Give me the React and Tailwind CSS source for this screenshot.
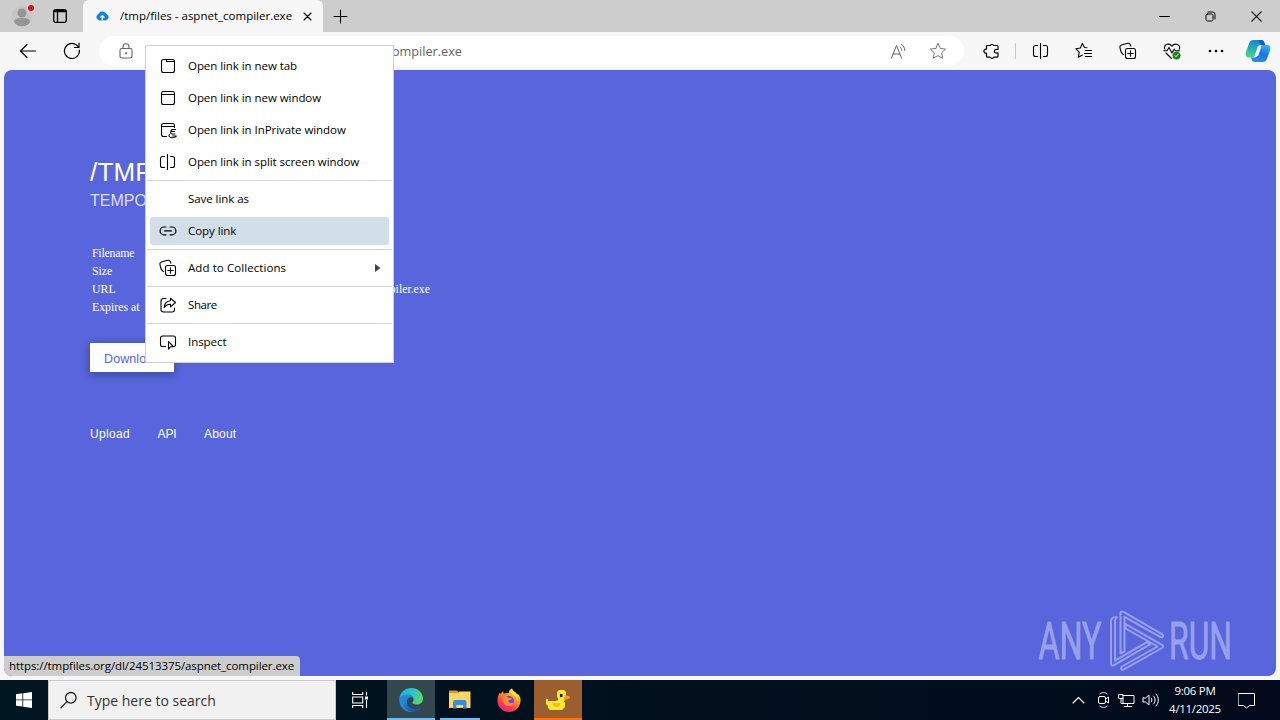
import React from "react";

function Icon({ w = 18, h = w, sw = 1.1, className = "", children }) {
  return (
    <svg
      width={w}
      height={h}
      viewBox={`0 0 ${w} ${h}`}
      fill="none"
      stroke="currentColor"
      strokeWidth={sw}
      strokeLinecap="round"
      strokeLinejoin="round"
      className={`shrink-0 ${className}`}
    >
      {children}
    </svg>
  );
}

const CollectionsIcon = () => (
  <Icon>
    <rect x="6.5" y="6.5" width="10" height="10" rx="2" />
    <path d="M11.5 8.8v5.4M8.8 11.5h5.4M4.6 12.6 4 12.2C2.6 11.4 2 10 1.6 8.5L1 5.6C.7 4.4 1.2 3.4 2.4 3L8.7 1.3c1.2-.3 2.2.3 2.6 1.4l.5 1.5" />
  </Icon>
);

const SplitIcon = () => (
  <Icon>
    <path d="M5.500 3.500H3.500a2 2 0 0 0-2 2v7a2 2 0 0 0 2 2h2M11.500 3.500h2a2 2 0 0 1 2 2v7a2 2 0 0 1-2 2h-2M8.500 1.500v15" />
  </Icon>
);

function TabStrip() {
  return (
    <div className="flex h-8 shrink-0 bg-[#cdcdcd]">
      <div className="flex w-[83px] items-center rounded-br-md">
        <svg width="24" height="24" viewBox="0 0 24 24" className="ml-3">
          <circle cx="10" cy="12" r="10.5" fill="#c8c6c4" />
          <circle cx="10" cy="9" r="4.5" fill="#979593" />
          <path d="M2 18c0-3 3-4 8-4s8 1 8 4c-1.5 3-5 4.300-8 4.300S3.500 21 2 18z" fill="#979593" />
          <circle cx="19" cy="4" r="3" fill="#d9131c" />
        </svg>
        <Icon w={16} sw={1.3} className="ml-4 text-black">
          <rect x="1.700" y="1.700" width="12.600" height="12.600" rx="2" />
          <path d="M2.500 3.200h11" strokeWidth="2.200" />
          <path d="M5.500 4v10" />
        </Icon>
      </div>
      <div className="flex w-60 items-center rounded-t-md bg-[#f7f7f7] pl-[13px]">
        <svg width="13" height="12" viewBox="0 0 13 12" className="shrink-0">
          <path d="M3.200 10A3 3 0 0 1 2.600 4.300 4 4 0 0 1 10 4.200 3 3 0 0 1 10 10z" fill="#0d7df2" stroke="#0d7df2" strokeWidth=".8" />
          <path d="M6.400 10.500V6.200M4.300 7.600l2.100-2.100 2.100 2.100" stroke="#fff" strokeWidth="1.300" fill="none" />
        </svg>
        <span className="ml-[11px] w-[176px] whitespace-nowrap text-[11.5px] text-black">
          /tmp/files - aspnet_compiler.exe
        </span>
        <Icon w={9} className="ml-[7px] text-black">
          <path d="m1 1 7 7M8 1 1 8" />
        </Icon>
      </div>
      <div className="flex flex-1 items-center pl-[10px] text-black">
        <Icon w={15}>
          <path d="M7.500 1v13M1 7.500h13" />
        </Icon>
      </div>
      <div className="flex items-center pr-[18px] text-black">
        <Icon w={11} sw={1}>
          <path d="M.5 5.500h10" />
        </Icon>
        <Icon w={11} sw={1} className="ml-[35px]">
          <rect x="1" y="3" width="7" height="7" rx="1.500" />
          <path d="M3 1h4.500A2.500 2.500 0 0 1 10 3.500V8" />
        </Icon>
        <Icon w={11} sw={1.1} className="ml-[35px]">
          <path d="m.8.8 9.400 9.400M10.200.8.8 10.200" />
        </Icon>
      </div>
    </div>
  );
}

function Toolbar() {
  return (
    <div className="flex h-[38px] shrink-0 items-center bg-[#f7f7f7] text-black">
      <Icon className="ml-[19px]">
        <path d="M16.500 9H1.500M8 2.500 1.500 9 8 15.500" />
      </Icon>
      <Icon className="ml-[26px]" sw={1.2}>
        <path d="M16.400 8.200A7.500 7.500 0 1 1 13.700 3.200L15.800 5.300M16 1v4.500h-4.500" />
      </Icon>
      <div className="ml-[18px] flex h-[30px] w-[865px] items-center rounded-full bg-white text-[#666]">
        <Icon w={14} h={16} className="ml-[20px]">
          <rect x="1" y="5.500" width="12" height="9.500" rx="1.800" />
          <path d="M4 5.500V3.800a3 3 0 0 1 6 0v1.700" />
          <circle cx="7" cy="10.300" r=".6" fill="currentColor" />
        </Icon>
        <div className="flex w-[329px] justify-end whitespace-nowrap pt-0.5 text-[12.700px] text-[#666]">
          https://tmpfiles.org/24513375/aspnet_compiler.exe
        </div>
        <Icon w={17} sw={1} className="ml-auto">
          <path d="M1.500 15 6.500 2.500 11.500 15M3.200 11h6.600M10 4c1.300.8 1.700 2 1.700 3.500M11.500 1.500c2.200 1.300 3.200 3.200 3.200 6" />
        </Icon>
        <Icon w={18} sw={1} className="ml-[22px] mr-[17px] text-[#777]">
          <path d="m9 1.500 2.300 4.900 5.300.7-3.900 3.700 1 5.400L9 13.600l-4.700 2.600 1-5.400L1.400 7.100l5.300-.7z" />
        </Icon>
      </div>
      <Icon className="ml-[19px]" sw={1.200}>
        <path d="M4 3.500h3.200a2.100 2.100 0 0 1 3.600 0H14a1 1 0 0 1 1 1v3h-1.200a1.800 1.800 0 1 0 0 3.400H15v3.300a1 1 0 0 1-1 1h-3.200a2 2 0 0 1-3.600 0H4.500a1 1 0 0 1-1-1V11a2 2 0 1 1 0-3.800V4.500a1 1 0 0 1 .5-1z" />
      </Icon>
      <div className="ml-[14px] h-4 w-px bg-[#c8c8c8]" />
      <div className="ml-[16px]"><SplitIcon /></div>
      <Icon className="ml-[25px]">
        <path d="M12 5.800 9.500 5.500 7.400 1.500 5.300 6 .8 6.700l3.400 3.500-.8 5 4-2.200M10.500 8.500h6M9.500 11.500h7M10.500 14.500h6" />
      </Icon>
      <div className="ml-[26px]"><CollectionsIcon /></div>
      <Icon w={19} h={18} className="ml-[26px]">
        <path d="M1.800 7.200C.2 1.800 6.500.6 9 4.200c2.500-3.600 9.200-2.200 7.200 3M.8 8.800H4l2-3.300 3 5.500 2.300-4 1 1.800h4.200M3 11l5.500 5.500" />
        <circle cx="13.500" cy="13.500" r="3.800" fill="#16801a" stroke="#16801a" strokeWidth=".4" />
        <path d="m11.800 13.500 1.200 1.300 2.300-2.700" stroke="#fff" strokeWidth=".9" />
      </Icon>
      <svg width="16" height="4" viewBox="0 0 16 4" className="ml-[26px]">
        <circle cx="2" cy="2" r="1.300" />
        <circle cx="8" cy="2" r="1.300" />
        <circle cx="14" cy="2" r="1.300" />
      </svg>
      <svg width="26" height="24" viewBox="0 0 26 24" className="ml-[21px]">
        <defs>
          <linearGradient id="cpA" x1=".6" y1="0" x2=".3" y2="1">
            <stop offset="0" stopColor="#1481d6" />
            <stop offset=".5" stopColor="#22aebb" />
            <stop offset="1" stopColor="#4fd08c" />
          </linearGradient>
          <linearGradient id="cpB" x1=".8" y1="0" x2=".4" y2="1">
            <stop offset="0" stopColor="#37b4f4" />
            <stop offset=".5" stopColor="#1d77df" />
            <stop offset="1" stopColor="#1f8fe8" />
          </linearGradient>
        </defs>
        <path d="M8.500 1H16c2 0 3 1 3.500 3l.6 2H15.500c-1.800 0-2.600 1-3.200 3l-2 6.500c-.6 2-1.500 3-3.300 3H4c-3 0-4-2-3-5.500L4.200 4C5 1.800 6.500 1 8.500 1z" fill="url(#cpA)" />
        <path d="M17.500 23H10c-2 0-3-1-3.500-3L6 18.400h3.500c1.800 0 2.600-1 3.200-3l2-6.400c.6-2 1.500-3 3.300-3h4c3 0 4 2 3 5.500L21.800 20c-.8 2.200-2.300 3-4.300 3z" fill="url(#cpB)" />
        <path d="M12 1H16c2 0 3 1 3.500 3l.6 2h-3.600c-1-.3-1.300-1-1.600-2.200C14.500 2 13.500 1.200 12 1z" fill="#1459c4" />
        <path d="M13.800 8h1.700l-2.900 8.300h-2.100z" fill="#f4fbff" stroke="#f4fbff" strokeWidth="1.500" strokeLinejoin="round" />
      </svg>
    </div>
  );
}

function FilePage() {
  return (
    <div className="flex flex-1 bg-[#f7f7f7] px-1 pb-1">
      <main className="flex flex-1 flex-col overflow-hidden rounded-lg bg-[#5865dc] pl-[86px] font-['Liberation_Sans',Arial,sans-serif] text-white">
        <h1 className="mt-[87px] h-[30px] whitespace-nowrap text-[26px] leading-[30px] tracking-[0.2px]">/TMP</h1>
        <h2 className="mt-1 h-5 whitespace-nowrap text-base leading-5 text-[#dcdff8]">TEMPO</h2>
        <div className="mt-[33px] flex flex-col pl-0.5 font-['Liberation_Serif','Times_New_Roman',serif] text-[11.800px] leading-[18px]">
          <div className="tracking-[-0.2px]">Filename</div>
          <div>Size</div>
          <div className="flex">
            <span className="w-[52px]">URL</span>
            <span className="flex w-[286px] justify-end whitespace-nowrap">
              https://tmpfiles.org/24513375/aspnet_compiler.exe
            </span>
          </div>
          <div>Expires at</div>
        </div>
        <button className="mt-[27px] h-[29px] w-[84px] bg-white pl-[14px] pt-[3px] text-left text-[12.500px] tracking-[0.1px] text-[#5865dc] shadow-[0_2px_10px_rgba(0,0,0,0.35)]">
          Download
        </button>
        <nav className="mt-[52px] flex h-5 items-center text-xs tracking-[0.2px]">
          <a className="w-[67.500px] tracking-[0.35px]">Upload</a>
          <a className="w-[46.500px] tracking-[-0.1px]">API</a>
          <a>About</a>
        </nav>
      </main>
    </div>
  );
}

const menuIcons = {
  tab: (
    <Icon>
      <path d="M4 2.500h9.500a2 2 0 0 1 2 2v9a2 2 0 0 1-2 2h-9a2 2 0 0 1-2-2v-9a2 2 0 0 1 2-2M7.500 2.500V4.500h7.800" />
    </Icon>
  ),
  window: (
    <Icon>
      <rect x="2.500" y="2.500" width="13" height="13" rx="2" />
      <path d="M2.500 5.500h13" />
    </Icon>
  ),
  priv: (
    <Icon>
      <path d="M7.500 15.500h-3a2 2 0 0 1-2-2v-9a2 2 0 0 1 2-2h9a2 2 0 0 1 2 2v2M2.500 5.500h13M16.500 8.500h-3c-1.500 0-2 1.500-1 2M15.500 10.500h-3c-1.300 0-1.300 2.500.5 2.500h3M10.300 13.500c-1 1.200.3 3.200 2.200 3.200 1.500 0 4.500 0 4.800-1.700h-3.600" />
    </Icon>
  ),
  split: <SplitIcon />,
  link: (
    <Icon sw={1.200}>
      <path d="M7 5H5a3.900 3.900 0 0 0 0 7.800h2M11 5h2a3.900 3.900 0 0 1 0 7.800h-2M5.500 8.900h7" />
    </Icon>
  ),
  collections: <CollectionsIcon />,
  share: (
    <Icon>
      <path d="M7 2.500H4.500a2.500 2.500 0 0 0-2.500 2.500v8.500A2.500 2.500 0 0 0 4.500 16h8.500a2.500 2.500 0 0 0 2.500-2.500V12M11.500 2.200 16.500 6.500l-5 4.300V8.300C9 8.200 7.200 9 5.200 11.500 5.500 7.500 7.500 5 11.500 4.700z" />
    </Icon>
  ),
  inspect: (
    <Icon>
      <path d="M6.500 13.500h-3a2 2 0 0 1-2-2v-6.500a2 2 0 0 1 2-2h11a2 2 0 0 1 2 2v6.500a2 2 0 0 1-1.500 2M9.500 8.500v7.500l2.100-2.200h3z" />
    </Icon>
  ),
};

const menuGroups = [
  [
    ["Open link in new tab", "tab"],
    ["Open link in new window", "window"],
    ["Open link in InPrivate window", "priv"],
    ["Open link in split screen window", "split"],
  ],
  [
    ["Save link as", null],
    ["Copy link", "link"],
  ],
  [["Add to Collections", "collections"]],
  [["Share", "share"]],
  [["Inspect", "inspect"]],
];

function ContextMenu() {
  return (
    <div className="absolute left-[145px] top-[45px] flex w-[249px] flex-col border border-[#cfcfcf] bg-white py-1 text-[11.500px] tracking-[-0.06px] text-black">
      {menuGroups.map((group, g) => (
        <React.Fragment key={g}>
          {g > 0 && (
            <div className="h-[5px] px-px pt-0.5">
              <div className="h-px bg-[#d4d4d4]" />
            </div>
          )}
          {group.map(([label, icon]) => (
            <div key={label} className="h-8 px-1 py-0.5">
              <div
                className={`flex h-7 items-center rounded-[3px] pl-[9px] ${
                  label === "Copy link" ? "bg-[#d2dfe9]" : ""
                }`}
              >
                <span className="w-[29px]">{icon && menuIcons[icon]}</span>
                <span
                  className={`whitespace-nowrap ${
                    label === "Share" ? "tracking-[-0.4px]" : icon === "collections" ? "tracking-[0.08px]" : ""
                  }`}
                >
                  {label}
                </span>
                {icon === "collections" && (
                  <svg width="6" height="8" viewBox="0 0 6 8" className="ml-auto mr-2">
                    <path d="M0 0v8l5.500-4z" fill="#444" />
                  </svg>
                )}
              </div>
            </div>
          ))}
        </React.Fragment>
      ))}
    </div>
  );
}

function Watermark() {
  return (
    <svg
      width="230"
      height="84"
      viewBox="1030 596 230 84"
      className="absolute left-[1030px] top-[596px]"
      fill="none"
      stroke="#a5abed"
      strokeWidth="2"
      strokeLinejoin="round"
      opacity=".85"
    >
      <g fill="#a5abed" strokeWidth=".9" fontFamily="Roboto" fontSize="52" fontWeight="400">
        <text x="1038.500" y="659" textLength="63" lengthAdjust="spacingAndGlyphs">ANY</text>
        <text x="1169" y="659" textLength="63" lengthAdjust="spacingAndGlyphs">RUN</text>
      </g>
      <path d="M1120.500 653.500V613c0-1.500 1.500-2 3-1.200l39 22.500c1.500 1 .5 3.200-1.500 3l-36.500-20.500v34.500z" />
      <path d="M1117 617.500c-3-1-6 .5-6 3.500v43c0 1.500 1.500 2 3 1.200l36.500-21-3.500-2-32 18.500V620z" />
      <path d="M1125.500 624v4.500l32 18-35.500 20c-2 1.300-1.300 3.500 1 3.300l39-21.800c1.500-1 1.500-2.300 0-3.200z" />
    </svg>
  );
}

function EdgeLogo() {
  return (
    <svg width="24" height="24" viewBox="0 0 24 24">
      <defs>
        <linearGradient id="edA" x1="0" y1=".3" x2="1" y2=".5">
          <stop offset="0" stopColor="#2aa7e4" />
          <stop offset=".55" stopColor="#2fc4cd" />
          <stop offset="1" stopColor="#61d558" />
        </linearGradient>
        <linearGradient id="edB" x1="0" y1="0" x2="1" y2="1">
          <stop offset="0" stopColor="#1c8bdb" />
          <stop offset="1" stopColor="#0b4b9b" />
        </linearGradient>
      </defs>
      <path d="M.2 11C.9 4.500 6 0 12.200 0 19 0 24 5 24 10.500c0 4-3 6-6.200 6-3 0-4.400-1.200-4.400-2 0-.6 1.200-1.200 1.200-3C14.600 9 12.500 7 9.500 7 5 7 1 9 .2 11z" fill="url(#edA)" />
      <path d="M.2 11C1.200 8.200 4.500 6.500 8.500 6.500c3 0 5.500 2 5.900 4-.4-.7-1.400-1.200-2.400-1.200-2.500 0-4.300 2.200-4.300 5 0 4.300 4 7 8.300 7 2.500 0 4.500-.8 6-2C20.200 22 16.500 24 12 24 5 24-.5 18 .2 11z" fill="#2188d6" />
      <path d="M9.500 9.800c-1.100.9-1.800 2.600-1.800 4.500 0 4.300 4 7 8.300 7 2.500 0 4.500-.8 6-2-2 2.800-5 4.400-8.500 4.700C7 23 3.500 17.500 5.500 13c.9-1.800 2.300-2.900 4-3.200z" fill="url(#edB)" />
    </svg>
  );
}

function FirefoxLogo() {
  return (
    <svg width="24" height="24" viewBox="0 0 24 24">
      <defs>
        <linearGradient id="ffA" x1=".8" y1="0" x2=".2" y2="1">
          <stop offset="0" stopColor="#fff04a" />
          <stop offset=".35" stopColor="#ff9a22" />
          <stop offset=".7" stopColor="#ff3c50" />
          <stop offset="1" stopColor="#e31d87" />
        </linearGradient>
      </defs>
      <path d="M3 4.500 3.500 6 6 3l.8 2.700c1.800-.8 4-.7 5.200-.2C11 4 12.500 1.500 15 .5c.3 2.500 2.500 3 4 4.500l1 1.700.8-1C23 8 24 10.500 23.500 13.500 22.800 19.500 18 24 12 24S.6 19.300.5 13C.4 9.500 1.500 6.500 3 4.500z" fill="url(#ffA)" />
      <circle cx="12" cy="13" r="5" fill="#7440d8" />
      <path d="M6 9.500c2-1.500 4-1 6 .5h3c-.5 1.500-2 2-3.500 2.300-.5 2 1 3.200 3 2.700 1-.2 1.500-.7 2.500-.5-1 2.500-3 3.500-5.500 3.500-4 0-6.500-4-5.500-8.500z" fill="#ff8d2b" />
      <path d="M15 .5c.3 2.500 2.500 3 4 4.500 2.500 3 2.500 6.500 1 9 0-4-1.500-6-4.500-7.500C13.500 5.500 13 3 15 .5z" fill="#ffe23b" />
    </svg>
  );
}

function Taskbar() {
  return (
    <div className="flex h-10 shrink-0 bg-linear-to-r from-[#001620] to-[#020a1b] text-white">
      <div className="flex w-12 items-center justify-center">
        <svg width="16" height="16" viewBox="0 0 16 16" fill="#fff">
          <path d="M0 2.200 6.400 1.300v6.200H0zM7.200 1.200 16 0v7.500H7.200zM0 8.300h6.400v6.300L0 13.700zM7.200 8.300H16V16l-8.800-1.300z" />
        </svg>
      </div>
      <div className="flex w-72 items-center border border-[#c9c9c9] bg-[#f1f1f1] pl-[11px] text-[#333]">
        <Icon sw={1.300} className="text-[#222]">
          <circle cx="10.800" cy="6.800" r="5.300" />
          <path d="M7 10.600 1 16.800" />
        </Icon>
        <span className="ml-[9px] whitespace-nowrap text-[14px]">Type here to search</span>
      </div>
      <div className="flex w-[51px] items-center pl-4">
        <svg width="17" height="16" viewBox="0 0 17 16" fill="none" stroke="#fff" strokeWidth="1.100">
          <path d="M.7 0v2.500h10V0M.7 16v-2.500h10V16M.7 5h10v6H.7zM14.500 0v3.500M14.500 8v8" />
          <path d="M13 4.500h3v3h-3z" fill="#fff" stroke="none" />
        </svg>
      </div>
      <div className="flex w-12 items-center justify-center border-b-2 border-[#76b9ed] bg-[#33474f] pt-0.5">
        <EdgeLogo />
      </div>
      <div className="ml-[5px] flex w-10 items-center justify-center border-b-2 border-[#76b9ed]">
        <svg width="22" height="19" viewBox="0 0 22 19">
          <path d="M0 .5h8l2 2.500h11V6H0z" fill="#e8961d" />
          <path d="M0 3h9l1.500-1.500H21.500V18H0z" fill="#ffd667" />
          <path d="M4 18.500V12a2 2 0 0 1 2-2h9.500a2 2 0 0 1 2 2v6.500H14V15H7.500v3.500z" fill="#3b8fcf" />
        </svg>
      </div>
      <div className="ml-[5px] flex w-12 items-center justify-center">
        <FirefoxLogo />
      </div>
      <div className="ml-px flex w-12 items-center justify-center border-b-2 border-[#f7730f] bg-[#9b5f2f] pt-0.5">
        <svg width="24" height="21" viewBox="0 0 24 21">
          <path d="M13 0h5l2 2v7l-2 2v1h1v5l-3 3H4l-2-2v-2L0 14V9h2v2h8l2-1V8l-1-1V2z" fill="#ffe832" />
          <path d="M19 5l5 1.500V8l-3 1.500h-3V7h1z" fill="#f39a2a" />
          <path d="M7 13h7v2l-2 2H9l-2-2z" fill="#f3bb1e" />
          <path d="M14 4h2.500v3H14z" fill="#1d1a10" />
        </svg>
      </div>
      <div className="ml-auto flex items-center">
        <Icon w={13} h={8}>
          <path d="M1 7 6.500 1.500 12 7" />
        </Icon>
        <Icon w={14} h={18} sw={1} className="ml-[12px]">
          <rect x="1.500" y="5.500" width="7" height="7" rx="1.500" />
          <path d="M8.500 8 11.500 6v6l-3-2M3 3c2-2 5-2 7 0M3 15c2 2 5 2 7 0" />
        </Icon>
        <Icon w={17} h={15} sw={1} className="ml-[7px]">
          <path d="M5 2.500h11v8H5M5 10.500V5.500M9.500 10.500v3M6.500 13.500h7M1 1.500h4v4H1zM3 5.500v5h2" />
        </Icon>
        <Icon w={17} h={14} sw={1} className="ml-[7px]">
          <path d="M1 5v4h2.500L7 12V2L3.500 5zM9.200 5c1 1.200 1 2.800 0 4M11.500 3c2.200 2.300 2.200 5.700 0 8M14 1c3.200 3.500 3.200 8.500 0 12" />
        </Icon>
        <div className="ml-[9px] flex w-[54px] flex-col items-center whitespace-nowrap text-[11.500px] leading-[18px] tracking-[-0.3px]">
          <span>9:06 PM</span>
          <span>4/11/2025</span>
        </div>
        <Icon w={17} h={17} sw={1} className="ml-[16px] mr-[25px]">
          <path d="M.5 1.500h16v12h-5l-3 2.500-3-2.500h-5z" />
        </Icon>
      </div>
    </div>
  );
}

export default function App() {
  return (
    <div className="relative flex h-[720px] w-[1280px] flex-col overflow-hidden font-['Open_Sans','Noto_Sans',sans-serif]">
      <TabStrip />
      <Toolbar />
      <FilePage />
      <Taskbar />
      <div className="absolute left-1 top-[656px] flex h-5 w-[296px] items-center whitespace-nowrap rounded-tr rounded-bl-lg bg-[#cdcdcd] pl-[5px] text-[11.500px] tracking-[-0.08px] text-black">
        https://tmpfiles.org/dl/24513375/aspnet_compiler.exe
      </div>
      <Watermark />
      <ContextMenu />
    </div>
  );
}
